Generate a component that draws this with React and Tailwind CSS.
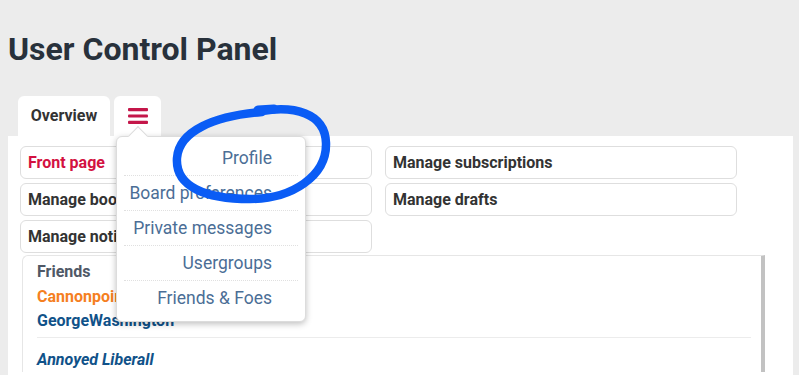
import React from 'react';

const quickLinks = [
  { label: 'Front page', active: true },
  { label: 'Manage subscriptions' },
  { label: 'Manage bookmarks' },
  { label: 'Manage drafts' },
  { label: 'Manage notification options' },
];

const menuItems = ['Profile', 'Board preferences', 'Private messages', 'Usergroups', 'Friends & Foes'];

const HamburgerIcon = () => (
  <svg width="20" height="18" viewBox="0 0 20 18">
    <rect x="0" y="1" width="20" height="3.2" rx="1" fill="#c4174a" />
    <rect x="0" y="7.4" width="20" height="3.2" rx="1" fill="#c4174a" />
    <rect x="0" y="13.8" width="20" height="3.2" rx="1" fill="#c4174a" />
  </svg>
);

const DropdownMenu = () => (
  <div className="absolute left-[2px] top-[40px] z-10 w-[190px] rounded-md border border-[#dcdcdc] bg-white px-[7px] pb-[6px] pt-[4px] shadow-[0_2px_6px_rgba(0,0,0,0.25)]">
    {/* pointer */}
    <div className="absolute left-[14px] top-[-8px] h-[14px] w-[14px] rotate-45 border-l border-t border-[#dcdcdc] bg-white" />
    {menuItems.map((item, i) => (
      <div
        key={item}
        className={`relative pr-[26px] text-right text-[17.5px] leading-[34px] text-[#4b6e96] ${i > 0 ? 'border-t border-dotted border-[#e0e0e0]' : ''}`}
      >
        {item}
      </div>
    ))}
  </div>
);

const Scribble = () => (
  <svg className="pointer-events-none absolute left-0 top-0 z-20" width="799" height="375" viewBox="0 0 799 375">
    <path
      d="M262 111 C293 106, 325 112, 326 143 C327 176, 292 199, 250 199 C206 199, 175 187, 177 158 C179 131, 214 116, 262 112"
      fill="none"
      stroke="#0a5cf5"
      strokeWidth="8.5"
      strokeLinecap="round"
    />
    <path d="M258 110 L274 109" stroke="#0a5cf5" strokeWidth="9" strokeLinecap="round" />
  </svg>
);

export default function App() {
  return (
    <div className="relative h-[375px] w-[799px] overflow-hidden bg-[#ececec] font-['Roboto','Liberation_Sans',sans-serif]">
      <Scribble />
      <div className="pl-[8px] pr-[6px]">
        <h1 className="pt-[29px] text-[32px] font-bold leading-[40px] text-[#28313b]">User Control Panel</h1>

        {/* tabs */}
        <div className="mt-[27px] flex gap-[4px] pl-[10px]">
          <div className="flex h-[40px] w-[92px] items-center justify-center rounded-t-md bg-white text-[16px] font-bold text-[#333]">
            Overview
          </div>
          <div className="relative flex h-[40px] w-[47px] items-center justify-center rounded-t-md bg-white">
            <HamburgerIcon />
            <DropdownMenu />
          </div>
        </div>

        {/* panel */}
        <div className="h-[300px] bg-white pl-[12px] pt-[10px]">
          <div className="grid grid-cols-[352px_352px] gap-x-[13px] gap-y-[4px]">
            {quickLinks.map((link) => (
              <div
                key={link.label}
                className={`flex h-[33px] items-center rounded-md border border-[#dedede] px-[7px] text-[16px] font-bold ${link.active ? 'text-[#d31141]' : 'text-[#333]'}`}
              >
                {link.label}
              </div>
            ))}
          </div>

          {/* friends */}
          <div className="ml-[2px] mt-[2px] w-[743px] rounded-tl-md border-l border-t border-r-4 border-[#e6e6e6] border-r-[#c2c2c2] pl-[14px] pr-[10px] pt-[4px]">
            <div className="text-[16px] font-bold leading-[24px] text-[#4f5866]">Friends</div>
            <div className="text-[16px] font-bold leading-[26px] text-[#f5801f]">Cannonpoint</div>
            <div className="text-[16px] font-bold leading-[22px] text-[#105289]">GeorgeWashington</div>
            <div className="mt-[5px] border-t border-[#ececec]" />
            <div className="pt-[10px] text-[16px] font-bold italic leading-[24px] text-[#105289]">Annoyed Liberall</div>
          </div>
        </div>
      </div>
    </div>
  );
}
